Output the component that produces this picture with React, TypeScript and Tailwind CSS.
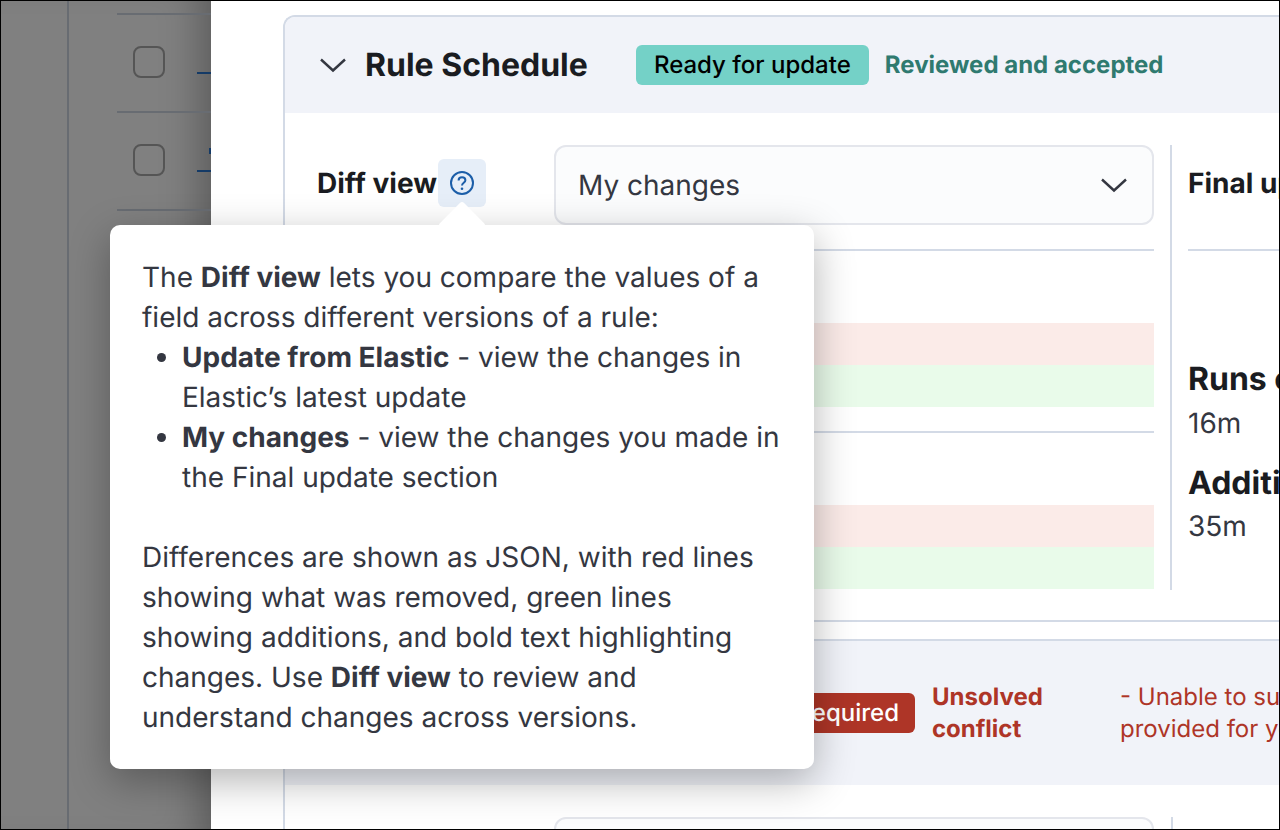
import React from "react";

const Chevron = ({ className }: { className?: string }) => (
  <svg className={className} width="28" height="16" viewBox="0 0 28 16" fill="none">
    <path d="M2 2.5 L14 13.5 L26 2.5" stroke="#343741" strokeWidth="2.4" />
  </svg>
);

const Checkbox = () => (
  <div className="w-8 h-8 rounded-lg border-2 border-[#555555] shrink-0" />
);

const TableRow = ({ nudge }: { nudge?: boolean }) => (
  <div className="h-[98px] border-t-2 border-[#686c72] flex items-start pt-[31px] pl-[16px] gap-[32px]">
    <Checkbox />
    <div className="relative mt-[26px] w-[14px] h-[2px] bg-[#143a66] shrink-0">
      {nudge && <div className="absolute right-0 -top-[22px] w-[2px] h-[6px] bg-[#143a66]" />}
    </div>
  </div>
);

const DiffBlock = () => (
  <div className="pt-[72px]">
    <div className="h-[42px] bg-[#fbebe8]" />
    <div className="h-[42px] bg-[#e9fbea]" />
  </div>
);

export default function App() {
  return (
    <div className="relative w-[1280px] h-[830px] overflow-hidden flex bg-white border border-black font-['Inter',sans-serif] text-[#343741] [text-rendering:geometricPrecision]">
      <aside className="w-[210px] shrink-0 bg-[#808080] flex shadow-[inset_-40px_0_40px_-30px_rgba(0,0,0,0.3)]">
        <div className="w-[68px] border-r-2 border-[#686c72] shrink-0" />
        <div className="flex-1 pt-[12px] pl-[48px]">
          <TableRow />
          <TableRow nudge />
          <div className="h-[98px] border-t-2 border-[#686c72]" />
        </div>
      </aside>

      <main className="flex-1 pt-[14px] pl-[72px] min-w-0">
        <section className="w-[1100px] border-l-2 border-[#d3dae6] border-t-2 rounded-tl-[12px]">
          <header className="h-[96px] bg-[#f1f3f9] rounded-tl-[10px] flex items-center pl-[34px]">
            <Chevron />
            <h2 className="ml-[18px] text-[32px] font-bold text-[#1a1c21]">Rule Schedule</h2>
            <span className="ml-[48px] h-10 w-[233px] rounded-md bg-[#74d1c7] flex items-center justify-center text-[24px] font-medium text-black">Ready for update</span>
            <span className="ml-4 text-[24px] font-bold text-[#2f7a70]">Reviewed and accepted</span>
          </header>
          <div className="flex pt-[32px] pl-[32px] h-[509px] border-b-2 border-[#d3dae6]">
            <div className="w-[838px]">
              <div className="flex items-start">
                <span className="w-[120px] mt-[18px] text-[28px] leading-10 font-bold text-[#1a1c21] whitespace-nowrap">Diff view</span>
                <span className="mt-[14px] ml-[1px] w-12 h-12 rounded-md bg-[#e6eef8] flex items-center justify-center">
                  <svg width="26" height="26" viewBox="0 0 26 26" fill="none">
                    <circle cx="13" cy="13" r="11" stroke="#1c5ea8" strokeWidth="2" />
                    <path d="M9.6 10.4c0-1.9 1.5-3.2 3.4-3.2s3.4 1.3 3.4 3c0 2.6-3.4 2.7-3.4 5.4" stroke="#1c5ea8" strokeWidth="2" />
                    <circle cx="13" cy="18.8" r="1.3" fill="#1c5ea8" />
                  </svg>
                </span>
                <div className="ml-[68px] w-[600px] h-20 rounded-xl border-2 border-[#e4e6ec] bg-[#fbfcfd] flex items-center justify-between pl-[22px] pr-[24px] text-[28px]">
                  <span>My changes</span>
                  <Chevron />
                </div>
              </div>
              <div className="mt-6 border-t-2 border-[#d3dae6]">
                <DiffBlock />
              </div>
              <div className="mt-6 border-t-2 border-[#d3dae6]">
                <DiffBlock />
              </div>
            </div>
            <div className="ml-[16px] w-[300px] h-[445px] border-l-2 border-[#d3dae6] pl-[16px] overflow-hidden">
              <div className="h-[106px] border-b-2 border-[#d3dae6] pt-[18px] text-[28px] leading-10 font-bold text-[#1a1c21] whitespace-nowrap">Final update</div>
              <div className="mt-[108px] text-[32px] leading-10 font-bold text-[#1a1c21] whitespace-nowrap">Runs every</div>
              <div className="mt-[4px] text-[28px] leading-10">16m</div>
              <div className="mt-[20px] text-[32px] leading-10 font-bold text-[#1a1c21] whitespace-nowrap">Additional look-back time</div>
              <div className="mt-[3px] text-[28px] leading-10">35m</div>
            </div>
          </div>
          <div className="h-[17px]" />
          <div className="border-t-2 border-[#d3dae6] h-[146px] bg-[#f1f3f9] flex items-center">
            <div className="ml-[300px] w-[330px] h-10 rounded-md bg-[#ae3527] text-white text-[24px] font-medium flex items-center justify-end pr-[16px] whitespace-nowrap">Action required</div>
            <div className="ml-[17px] w-[188px] text-[24px] leading-8 font-bold text-[#ae3527]">Unsolved conflict</div>
            <div className="w-[240px] text-[24px] leading-8 text-[#ae3527] whitespace-nowrap overflow-hidden">
              - Unable to submit
              <br />
              provided for your
            </div>
          </div>
          <div className="flex pt-[32px] pl-[32px]">
            <div className="w-[838px]">
              <div className="ml-[237px] w-[600px] h-20 rounded-xl border-2 border-[#e4e6ec] bg-[#fbfcfd]" />
            </div>
            <div className="ml-[16px] h-20 border-l-2 border-[#d3dae6]" />
          </div>
        </section>
      </main>

      <div className="absolute left-[109px] top-[224px] w-[704px] h-[544px] bg-white rounded-[10px] px-8 pt-8 text-[28px] leading-10 text-[#343741] shadow-[0_12px_40px_0_rgba(0,0,0,0.3)]">
        <div className="absolute left-[335px] -top-[17px] w-[34px] h-[34px] rotate-45 rounded-[3px] bg-white" />
        <p className="relative">
          The <b>Diff view</b> lets you compare the values of a field across different versions of a rule:
        </p>
        <ul className="list-disc pl-10">
          <li>
            <b>Update from Elastic</b> - view the changes in Elastic’s latest update
          </li>
          <li>
            <b>My changes</b> - view the changes you made in the Final update section
          </li>
        </ul>
        <p className="mt-10">
          Differences are shown as JSON, with red lines showing what was removed, green lines showing additions, and bold text highlighting changes. Use <b>Diff view</b> to review and understand changes across versions.
        </p>
      </div>
    </div>
  );
}
